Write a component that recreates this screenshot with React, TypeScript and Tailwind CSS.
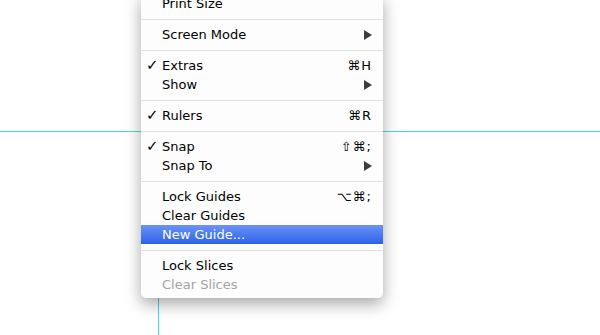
type Item =
  | { kind: "sep" }
  | { kind: "row"; label: string; check?: boolean; key?: string; sub?: boolean; active?: boolean; disabled?: boolean };

const items: Item[] = [
  { kind: "row", label: "Print Size" },
  { kind: "sep" },
  { kind: "row", label: "Screen Mode", sub: true },
  { kind: "sep" },
  { kind: "row", label: "Extras", check: true, key: "⌘H" },
  { kind: "row", label: "Show", sub: true },
  { kind: "sep" },
  { kind: "row", label: "Rulers", check: true, key: "⌘R" },
  { kind: "sep" },
  { kind: "row", label: "Snap", check: true, key: "⇧⌘;" },
  { kind: "row", label: "Snap To", sub: true },
  { kind: "sep" },
  { kind: "row", label: "Lock Guides", key: "⌥⌘;" },
  { kind: "row", label: "Clear Guides" },
  { kind: "row", label: "New Guide...", active: true },
  { kind: "sep" },
  { kind: "row", label: "Lock Slices" },
  { kind: "row", label: "Clear Slices", disabled: true },
];

function Arrow() {
  return (
    <svg width="8" height="10" viewBox="0 0 8 10">
      <polygon points="0,0 8,5 0,10" fill="#3c3c3c" />
    </svg>
  );
}

export default function App() {
  return (
    <div
      className="relative w-[600px] h-[335px] bg-white overflow-hidden"
      style={{ fontFamily: '"DejaVu Sans", Verdana, sans-serif' }}
    >
      {/* guides */}
      <div className="absolute left-0 right-0 top-[131px] h-px bg-[#3fdede]" />
      <div className="absolute top-0 bottom-0 left-[158px] w-px bg-[#3fdede]" />

      {/* menu */}
      <div className="absolute left-[141px] top-[-6px] w-[242px] pb-[4px] bg-[#fdfdfd] rounded-b-[5px] shadow-[0_6px_16px_rgba(0,0,0,0.35)] text-[13px] leading-none">
        {items.map((it, i) =>
          it.kind === "sep" ? (
            <div key={i} className="h-[12px] flex items-center">
              <div className="w-full h-px bg-[#e1e1e1]" />
            </div>
          ) : (
            <div
              key={i}
              className={
                "h-[19px] flex items-center pl-[21px] pr-[11px] relative " +
                (it.active
                  ? "bg-gradient-to-b from-[#6a93f4] to-[#2d60ea] text-white"
                  : it.disabled
                  ? "text-[#a3a3a3]"
                  : "text-black")
              }
            >
              {it.check && <span className="absolute left-[5px] text-[15px]">✓</span>}
              <span className="flex-1">{it.label}</span>
              {it.key && <span className="tracking-[1px]">{it.key}</span>}
              {it.sub && <Arrow />}
            </div>
          )
        )}
      </div>
    </div>
  );
}
